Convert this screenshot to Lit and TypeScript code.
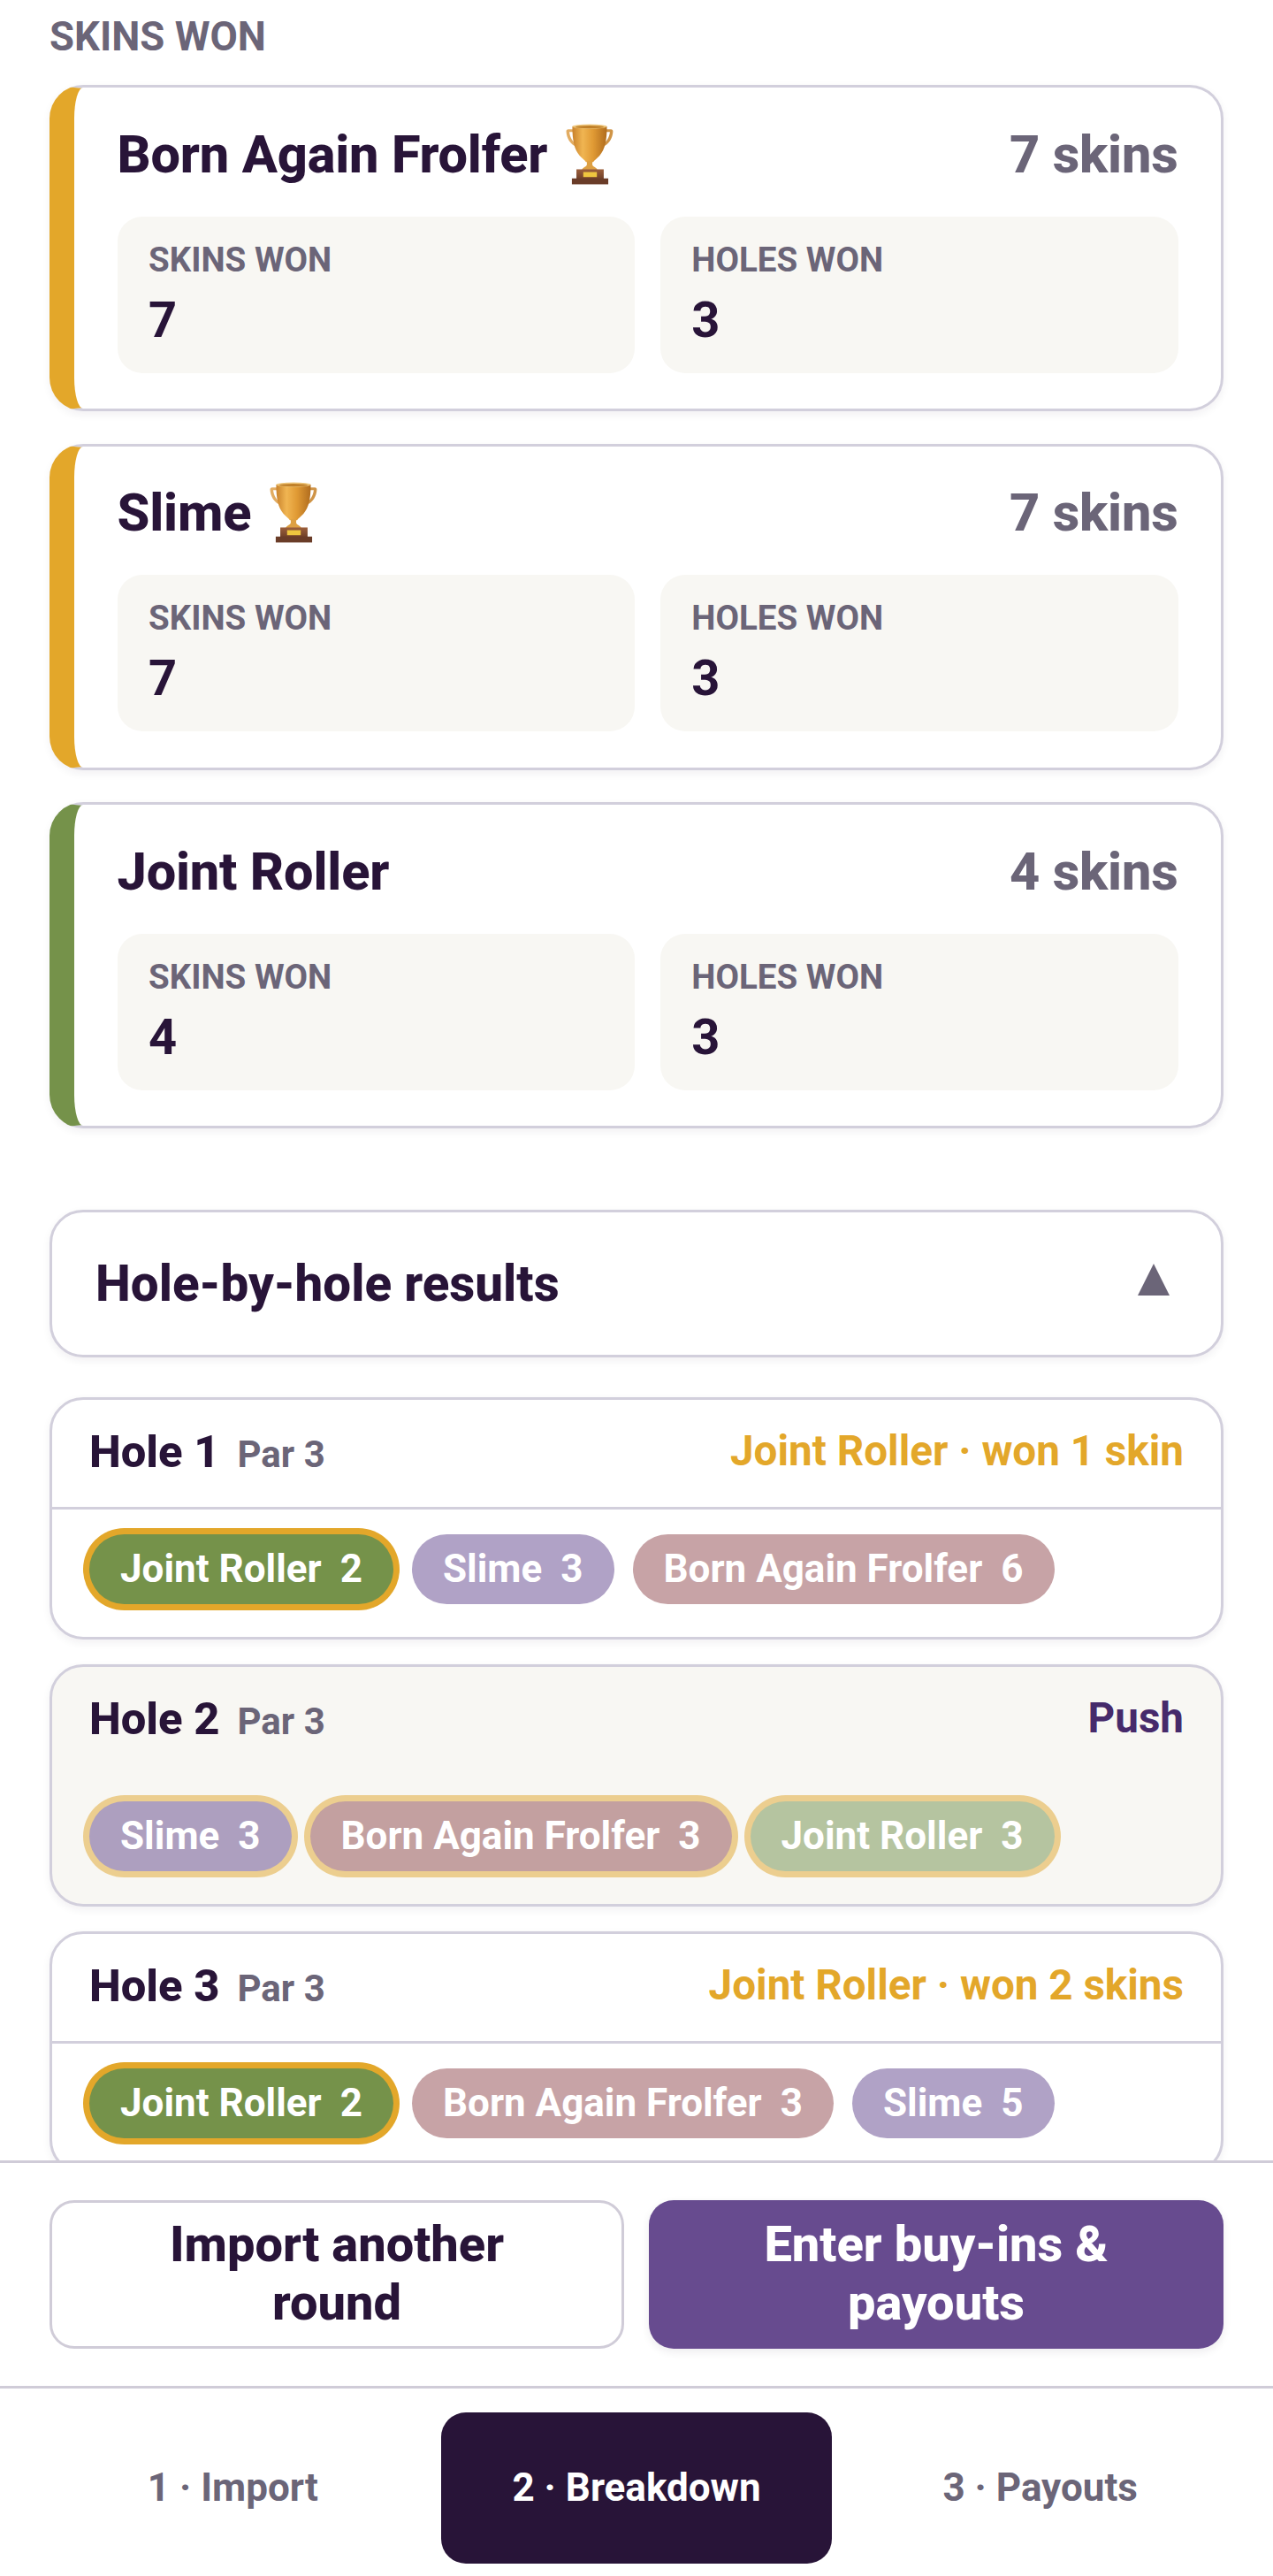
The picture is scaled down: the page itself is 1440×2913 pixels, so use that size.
import { LitElement, html, css, svg } from "lit";
import { customElement } from "lit/decorators.js";

const trophy = html`<svg class="trophy" viewBox="20 10 58 70" aria-hidden="true">
  <defs>
    <linearGradient id="cup" x1="0" x2="1" y1="0" y2="0">
      <stop offset="0" stop-color="#c9822c"/><stop offset=".3" stop-color="#f0b552"/><stop offset=".6" stop-color="#e09a34"/><stop offset="1" stop-color="#b06c1e"/>
    </linearGradient>
    <linearGradient id="wood" x1="0" x2="0" y1="0" y2="1">
      <stop offset="0" stop-color="#9c5f3c"/><stop offset="1" stop-color="#6e3f28"/>
    </linearGradient>
  </defs>
  ${svg`
  <path d="M31 17H24.5c-1.5 0-2.300 1-2.200 2.600.4 7 4.400 14.500 11.200 16.600l1-2.600c-5-1.800-8.200-7.800-8.800-13.600H31z" fill="#e2ac62"/>
  <path d="M65 17h6.500c1.500 0 2.300 1 2.200 2.600-.4 7-4.400 14.500-11.200 16.600l-1-2.600c5-1.800 8.200-7.800 8.800-13.600H65z" fill="#cf9447"/>
  <path d="M29 14h38c0 15-2 25-8 32-3 3.400-6 5-7 7h-8c-1-2-4-3.600-7-7-6-7-8-17-8-32z" fill="url(#cup)"/>
  <ellipse cx="48" cy="14" rx="19" ry="2.600" fill="#eec67c"/>
  <ellipse cx="48" cy="14.500" rx="15.500" ry="1.500" fill="#c08029"/>
  <path d="M45 52h6v4c0 1.500 2.500 2.500 4 3.500 1.500 1 1.500 2 1.500 2.500h-17c0-.5 0-1.500 1.500-2.500 1.500-1 4-2 4-3.500z" fill="#dda043"/>
  <rect x="33.500" y="61" width="30" height="11" fill="url(#wood)"/>
  <rect x="28.500" y="71" width="40" height="6.500" fill="#6a3c28"/>
  <rect x="41" y="64" width="15" height="5.500" fill="#efc63f"/>
  `}
</svg>`;

const players = [
  { name: "Born Again Frolfer", skins: 7, holes: 3, color: "#e3a72a", trophy: true },
  { name: "Slime", skins: 7, holes: 3, color: "#e3a72a", trophy: true },
  { name: "Joint Roller", skins: 4, holes: 3, color: "#75924a", trophy: false },
];

const holes = [
  { n: 1, right: "Joint Roller · won 1 skin", push: false, pills: [["Joint Roller", 2, "green", "win"], ["Slime", 3, "purple", ""], ["Born Again Frolfer", 6, "rose", ""]] },
  { n: 2, right: "Push", push: true, pills: [["Slime", 3, "purple", "tie"], ["Born Again Frolfer", 3, "rose", "tie"], ["Joint Roller", 3, "sage", "tie"]] },
  { n: 3, right: "Joint Roller · won 2 skins", push: false, pills: [["Joint Roller", 2, "green", "win"], ["Born Again Frolfer", 3, "rose", ""], ["Slime", 5, "purple", ""]] },
];

@customElement("app-root")
export class AppRoot extends LitElement {
  static styles = css`
    :host {
      display: flex;
      flex-direction: column;
      height: 2913px;
      width: 1440px;
      overflow: hidden;
      background: #fff;
      font-family: Roboto, "Liberation Sans", sans-serif;
      font-weight: 700;
      color: #281438;
      box-sizing: border-box;
    }
    * { box-sizing: border-box; }
    main {
      flex: 1 1 auto;
      min-height: 0;
      overflow: hidden;
      padding: 15px 56px 0;
    }
    .section-label {
      font-size: 45.5px;
      line-height: 53px;
      color: #6b6578;
      margin-bottom: 28px;
    }
    .players { display: flex; flex-direction: column; gap: 36.500px; }
    .player {
      background: #fff;
      border: 3.5px solid #d2cfdc;
      border-left-width: 28px;
      border-radius: 38px;
      padding: 40.5px 48.5px;
      box-shadow: 0 3.5px 10px rgba(40, 20, 56, 0.06);
    }
    .player-head {
      display: flex;
      justify-content: space-between;
      align-items: center;
      height: 70px;
      margin-bottom: 35px;
      font-size: 59.5px;
      font-weight: 800;
      letter-spacing: -0.2px;
    }
    .player-name { display: flex; align-items: center; }
    .trophy { width: 60px; height: 72px; margin-left: 19px; }
    .player-skins { color: #6b6578; }
    .stats { display: grid; grid-template-columns: 1fr 1fr; gap: 28.500px; }
    .stat {
      background: #f8f7f3;
      border-radius: 28px;
      height: 177px;
      padding: 26px 35.5px 0;
    }
    .stat-label { font-size: 38.5px; line-height: 45px; color: #6b6578; }
    .stat-value { font-size: 56px; line-height: 66px; margin-top: 13px; }

    .toggle {
      margin-top: 92px;
      height: 167px;
      background: #fff;
      border: 3.5px solid #d2cfdc;
      border-radius: 38px;
      box-shadow: 0 3.5px 10px rgba(40, 20, 56, 0.06);
      display: flex;
      align-items: center;
      justify-content: space-between;
      padding: 0 58px 0 49px;
      font-size: 56.5px;
      font-weight: 800;
    }
    .toggle svg { width: 36px; height: 36px; display: block; margin-top: -10px; }

    .holes { display: flex; flex-direction: column; gap: 28px; margin-top: 44.500px; }
    .hole {
      background: #fff;
      border: 3.5px solid #d2cfdc;
      border-radius: 38px;
      box-shadow: 0 3.5px 10px rgba(40, 20, 56, 0.06);
      height: 274px;
      overflow: hidden;
    }
    .hole.push { background: #f8f7f3; }
    .hole-head {
      height: 124.500px;
      padding: 0 42px 4px;
      display: flex;
      align-items: center;
      justify-content: space-between;
      border-bottom: 3.5px solid #d2cfdc;
    }
    .hole.push .hole-head { border-bottom-color: transparent; }
    .hole-title { display: flex; align-items: baseline; gap: 20px; font-size: 50.75px; font-weight: 800; }
    .par { font-size: 42px; color: #6b6578; font-weight: 700; }
    .result { font-size: 47.6px; color: #e3a72a; }
    .hole.push .result { color: #462a6b; }
    .pills { display: flex; gap: 21px; padding: 27.5px 42px 0; }
    .pill {
      height: 79.5px;
      border-radius: 999px;
      padding: 0 35px;
      display: flex;
      align-items: center;
      gap: 21px;
      color: #fff;
      font-size: 44px;
      white-space: nowrap;
    }
    .green { background: #75924a; }
    .purple { background: #b0a2c6; }
    .rose { background: #c7a3a6; }
    .sage { background: #b5c4a0; }
    .tie.purple { background: #ad9fbf; }
    .tie.rose { background: #c3a0a0; }
    .win { box-shadow: 0 0 0 7px #e3a72a; }
    .tie { box-shadow: 0 0 0 7px #ecce8f; }

    .actions {
      flex: none;
      background: #fff;
      border-top: 3.5px solid #d0ccd8;
      padding: 42px 56px;
      display: grid;
      grid-template-columns: 1fr 1fr;
      gap: 28px;
    }
    .btn {
      height: 168px;
      border-radius: 28px;
      display: flex;
      align-items: center;
      justify-content: center;
      text-align: center;
      font-size: 56px;
      font-weight: 800;
      line-height: 66px;
      padding: 0 56px 2px;
    }
    .btn.secondary { background: #fff; border: 3.5px solid #d0ccd8; }
    .btn.primary { background: #674b8f; color: #fff; box-shadow: 0 3.5px 10px rgba(40, 20, 56, 0.08); }

    nav {
      flex: none;
      height: 215px;
      background: #fff;
      border-top: 3.5px solid #d0ccd8;
      padding: 26.500px 42px 14px;
      display: grid;
      grid-template-columns: repeat(3, 1fr);
      gap: 14px;
    }
    .tab {
      display: flex;
      align-items: center;
      justify-content: center;
      font-size: 44px;
      color: #6b6578;
      border-radius: 28px;
    }
    .tab.active { background: #281438; color: #fff; }
  `;

  render() {
    return html`
      <main>
        <div class="section-label">SKINS WON</div>
        <div class="players">
          ${players.map(
            (p) => html`
              <section class="player" style="border-left-color:${p.color}">
                <div class="player-head">
                  <span class="player-name">${p.name}${p.trophy ? trophy : ""}</span>
                  <span class="player-skins">${p.skins} skins</span>
                </div>
                <div class="stats">
                  <div class="stat"><div class="stat-label">SKINS WON</div><div class="stat-value">${p.skins}</div></div>
                  <div class="stat"><div class="stat-label">HOLES WON</div><div class="stat-value">${p.holes}</div></div>
                </div>
              </section>
            `
          )}
        </div>
        <div class="toggle">
          <span>Hole-by-hole results</span>
          <svg viewBox="0 0 36 36" aria-hidden="true"><polygon points="18,0 36,36 0,36" fill="#6b6578"/></svg>
        </div>
        <div class="holes">
          ${holes.map(
            (h) => html`
              <section class="hole ${h.push ? "push" : ""}">
                <div class="hole-head">
                  <span class="hole-title"><span>Hole ${h.n}</span><span class="par">Par 3</span></span>
                  <span class="result">${h.right}</span>
                </div>
                <div class="pills">
                  ${h.pills.map(
                    (x) => html`<span class="pill ${x[2]} ${x[3]}"><span>${x[0]}</span><span>${x[1]}</span></span>`
                  )}
                </div>
              </section>
            `
          )}
        </div>
      </main>
      <div class="actions">
        <div class="btn secondary">Import another round</div>
        <div class="btn primary">Enter buy-ins &amp; payouts</div>
      </div>
      <nav>
        <div class="tab">1 · Import</div>
        <div class="tab active">2 · Breakdown</div>
        <div class="tab">3 · Payouts</div>
      </nav>
    `;
  }
}
